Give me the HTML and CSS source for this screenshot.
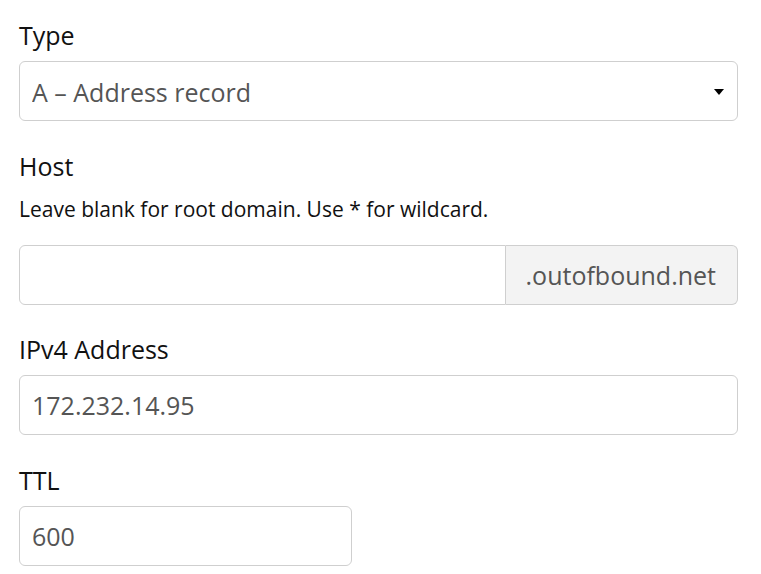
FILE: index.html
```html
<!DOCTYPE html>
<html lang="en">
<head>
<meta charset="utf-8">
<title>DNS record</title>
<link rel="stylesheet" href="styles.css">
</head>
<body>
<form class="form">
  <div class="group">
    <label class="label" for="type">Type</label>
    <div class="select-wrap">
      <select id="type" class="control select">
        <option>A – Address record</option>
      </select>
      <svg class="caret" width="10" height="6" viewBox="0 0 10 6" aria-hidden="true"><path d="M0 0H10L5 6Z" fill="#000"/></svg>
    </div>
  </div>
  <div class="group">
    <label class="label" for="host">Host</label>
    <p class="help">Leave blank for root domain. Use * for wildcard.</p>
    <div class="input-group">
      <input id="host" class="control grow" type="text" value="">
      <span class="addon">.outofbound.net</span>
    </div>
  </div>
  <div class="group">
    <label class="label" for="ip">IPv4 Address</label>
    <input id="ip" class="control" type="text" value="172.232.14.95">
  </div>
  <div class="group">
    <label class="label" for="ttl">TTL</label>
    <input id="ttl" class="control ttl" type="text" value="600">
  </div>
</form>
</body>
</html>
```

FILE: styles.css
```css
* { box-sizing: border-box; }
html, body { margin: 0; padding: 0; background: #fff; }
body {
  font-family: "Open Sans", "Liberation Sans", sans-serif;
  color: #111;
}
.form {
  padding: 17px 23px 0 19px;
  display: flex;
  flex-direction: column;
  gap: 26.5px;
}
.group { display: flex; flex-direction: column; }
.label {
  font-size: 25px;
  line-height: 36px;
  margin-bottom: 8px;
  color: #111;
}
.help {
  font-size: 21px;
  line-height: 31px;
  margin: 2px 0 20px;
  color: #111;
}
.control {
  display: block;
  width: 100%;
  height: 60px;
  padding: 11px 12px;
  font-family: inherit;
  font-size: 25px;
  line-height: 36px;
  color: #555;
  background: #fff;
  border: 1px solid #cfcfcf;
  border-radius: 6px;
  outline: none;
  margin: 0;
}
.select-wrap { position: relative; }
.select {
  appearance: none;
  -webkit-appearance: none;
  padding: 12px 40px 10px 12px;
}
.caret {
  position: absolute;
  right: 14px;
  top: 28px;
  pointer-events: none;
}
.input-group { display: flex; }
.grow {
  flex: 1;
  width: auto;
  min-width: 0;
  border-top-right-radius: 0;
  border-bottom-right-radius: 0;
}
.addon {
  display: flex;
  align-items: center;
  height: 60px;
  padding: 0 21px 0 20px;
  font-size: 25px;
  color: #555;
  background: #f3f3f3;
  border: 1px solid #cfcfcf;
  border-left: none;
  border-radius: 0 6px 6px 0;
}
.ttl { width: 333px; }
```
